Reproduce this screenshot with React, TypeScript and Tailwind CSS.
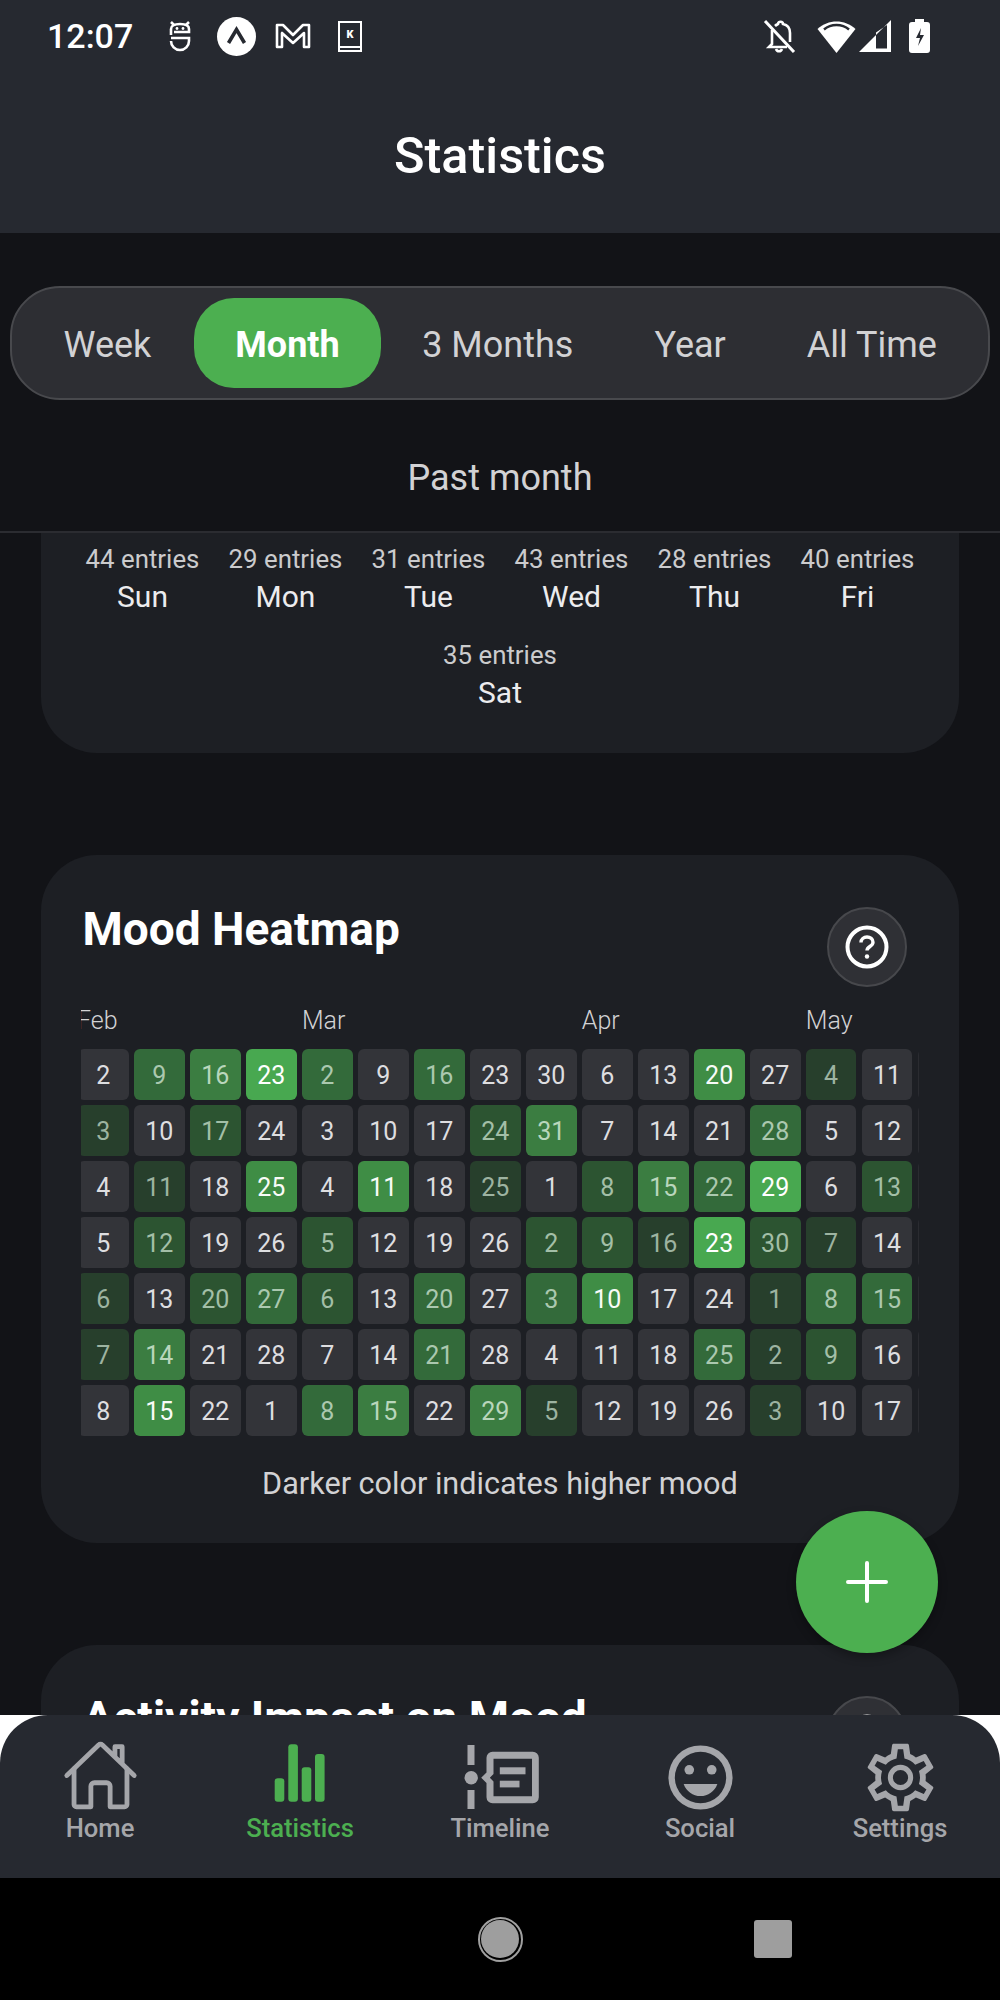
import React from 'react';
import { IoHomeOutline } from 'react-icons/io5';

// level -1 is a day without an entry, the rest go from low to high mood
const levelClass: Record<number, string> = {
  [-1]: 'bg-[#333439] text-[#dedee0]',
  0: 'bg-[#273f2c] text-[#9db3a1]',
  1: 'bg-[#2c5431] text-[#a3bfa7]',
  2: 'bg-[#336a3a] text-[#abc8af]',
  3: 'bg-[#3b7d41] text-[#b9d6bc]',
  4: 'bg-[#3f8d45] text-[#f8fbf8]',
  5: 'bg-[#48a850] text-white',
};

const days = [
  [2, 9, 16, 23, 2, 9, 16, 23, 30, 6, 13, 20, 27, 4, 11],
  [3, 10, 17, 24, 3, 10, 17, 24, 31, 7, 14, 21, 28, 5, 12],
  [4, 11, 18, 25, 4, 11, 18, 25, 1, 8, 15, 22, 29, 6, 13],
  [5, 12, 19, 26, 5, 12, 19, 26, 2, 9, 16, 23, 30, 7, 14],
  [6, 13, 20, 27, 6, 13, 20, 27, 3, 10, 17, 24, 1, 8, 15],
  [7, 14, 21, 28, 7, 14, 21, 28, 4, 11, 18, 25, 2, 9, 16],
  [8, 15, 22, 1, 8, 15, 22, 29, 5, 12, 19, 26, 3, 10, 17],
];

const levels = [
  [-1, 2, 3, 5, 2, -1, 2, -1, -1, -1, -1, 4, -1, 0, -1],
  [0, -1, 1, -1, -1, -1, -1, 1, 3, -1, -1, -1, 2, -1, -1],
  [-1, 0, -1, 4, -1, 4, -1, 0, -1, 1, 3, 2, 5, -1, 1],
  [-1, 1, -1, -1, 1, -1, -1, -1, 1, 1, 0, 5, 1, 0, -1],
  [0, -1, 1, 2, 1, -1, 2, -1, 2, 4, -1, -1, 0, 2, 2],
  [0, 3, -1, -1, -1, -1, 2, -1, -1, -1, -1, 2, 0, 1, -1],
  [-1, 4, -1, -1, 2, 3, -1, 3, 0, -1, -1, -1, 0, -1, -1],
];

const weekdays = [
  { name: 'Sun', count: 44 },
  { name: 'Mon', count: 29 },
  { name: 'Tue', count: 31 },
  { name: 'Wed', count: 43 },
  { name: 'Thu', count: 28 },
  { name: 'Fri', count: 40 },
  { name: 'Sat', count: 35 },
];

const ranges = ['Week', 'Month', '3 Months', 'Year', 'All Time'];

const rangeClass = (r: string) => {
  if (r === 'Month') {
    return 'h-[90px] ml-[1px] mr-[1px] pt-[4px] px-[41px] rounded-[40px] bg-[#4caf50] flex items-center shrink-0 whitespace-nowrap text-[36px] font-bold text-white';
  }
  if (r === 'Week') {
    return 'h-[90px] pt-[4px] px-[42px] flex items-center shrink-0 whitespace-nowrap text-[36px] text-[#d2d2d4]';
  }
  return 'h-[90px] pt-[4px] px-[40.500px] flex items-center shrink-0 whitespace-nowrap text-[36px] text-[#d2d2d4]';
};

const StatusBar = () => (
  <div className="flex items-center h-[72px] pl-[47px] pr-[70px] text-white">
    <span className="text-[34px] leading-[40px] font-medium w-[121px]">12:07</span>
    <svg width="24" height="32" viewBox="0 0 24 32" fill="none" stroke="white" strokeWidth="2.6" className="-mt-[1px]">
      <path d="M3 15V9c0-3 3-5 9-5s9 2 9 5v3H6" />
      <path d="M3 2l3 3M21 2l-3 3" />
      <path d="M3 18h18v3c0 5-4 9-9 9s-9-4-9-9" />
      <circle cx="9" cy="8.5" r="1.4" fill="white" stroke="none" />
      <circle cx="15" cy="8.5" r="1.4" fill="white" stroke="none" />
    </svg>
    <svg width="39" height="39" viewBox="0 0 39 39" className="ml-[25px]">
      <circle cx="19.5" cy="19.5" r="19.5" fill="white" />
      <path d="M11.5 26L19.5 12.5L27.5 26" fill="none" stroke="#262930" strokeWidth="3.6" />
    </svg>
    <svg width="36" height="28" viewBox="0 0 36 28" fill="none" stroke="white" strokeWidth="2.6" strokeLinejoin="round" className="ml-[19px]">
      <path d="M2 25V3h6l10 10L28 3h6v22h-5V11l-11 10L7 11v14z" />
    </svg>
    <div className="ml-[27px] w-[24px] h-[31px] border-2 border-white flex flex-col">
      <div className="flex-1 flex items-center justify-center bg-[#262930]">
        <span className="text-[11px] leading-none font-black text-white">K</span>
      </div>
      <div className="h-[4px] border-t-2 border-white" />
    </div>
    <div className="flex-1" />
    <svg width="33" height="34" viewBox="0 0 33 34" fill="none" stroke="white" strokeWidth="2.6">
      <path d="M9 11v14l-3 3h18" />
      <path d="M12 7c1-1 2-1.500 3-2 0-3 5-3 5 0 5 1 7 5 7 9v9" />
      <path d="M13 30c1 3 5 3 6 0" />
      <path d="M2 2l29 31" strokeWidth="3" />
    </svg>
    <svg width="39" height="33" viewBox="0 0 39 33" className="ml-[21px]">
      <path d="M19.500 33L0.500 9C11 -1 28 -1 38.500 9z" fill="white" />
      <path d="M7 9.500C14 3.500 25 3.500 32 9.500" fill="none" stroke="#262930" strokeWidth="2.400" />
    </svg>
    <svg width="32" height="32" viewBox="0 0 32 32" className="ml-[3px]">
      <path d="M0 32L32 0V32zM17 12.500V28.500H28V5z" fill="white" fillRule="evenodd" />
    </svg>
    <svg width="21" height="34" viewBox="0 0 21 34" className="ml-[18px]">
      <path d="M6 0h9v3h3c2 0 3 1 3 3v25c0 2-1 3-3 3H3c-2 0-3-1-3-3V6c0-2 1-3 3-3h3z" fill="white" />
      <path d="M12 9l-5 10h4l-2 8 6-11h-4z" fill="#262930" />
    </svg>
  </div>
);

const HelpButton = () => (
  <div className="w-[80px] h-[80px] mt-[4.500px] rounded-full bg-[#2f3035] border-[2.500px] border-[#47484c] flex items-center justify-center shrink-0">
    <svg width="44" height="44" viewBox="0 0 44 44" fill="none" stroke="white" strokeWidth="4">
      <circle cx="22" cy="22" r="19.500" />
      <path d="M16 17.500c0-3.500 2.800-5.500 6-5.500s6 2 6 5.200c0 4.300-6 4.300-6 8.300" strokeWidth="3.400" />
      <circle cx="22" cy="31.500" r="2.200" fill="white" stroke="none" />
    </svg>
  </div>
);

const CardHeader = ({ title }: { title: string }) => (
  <div className="flex items-start justify-between">
    <h2 className="text-[46px] leading-[54px] font-bold text-white whitespace-nowrap">{title}</h2>
    <div className="mr-[12px]">
      <HelpButton />
    </div>
  </div>
);

const WeekdayCard = () => (
  <section className="mx-[41px] -mt-[60px] pt-[71px] pb-[41.500px] px-[30px] rounded-[56px] bg-[#1d1f24] flex flex-wrap justify-center gap-y-[25px]">
    {weekdays.map((d) => (
      <div key={d.name} className="w-[143px] flex flex-col items-center gap-[5px]">
        <span className="text-[25.800px] leading-[30px] text-[#cbcbcd]">{d.count} entries</span>
        <span className="text-[30px] leading-[36px] text-[#ececee]">{d.name}</span>
      </div>
    ))}
  </section>
);

const Heatmap = () => (
  <section className="mx-[41px] mt-[102px] pt-[47.500px] pb-[40.700px] pl-[40.300px] pr-[40.500px] rounded-[56px] bg-[#1d1f24]">
    <div className="pl-[1.200px]">
      <CardHeader title="Mood Heatmap" />
    </div>
    <div className="overflow-hidden">
      <div className="-ml-[3.300px] w-[896px]">
        <div className="grid grid-cols-[repeat(16,50.700px)] gap-x-[5.300px] mt-[19px] mb-[13.800px] text-[25px] leading-[30px] font-light text-[#d2d2d4]">
          <span className="col-span-4 -ml-[1px]">Feb</span>
          <span className="col-span-5">Mar</span>
          <span className="col-span-4">Apr</span>
          <span className="col-span-3">May</span>
        </div>
        <div className="grid grid-cols-[repeat(16,50.700px)] gap-[5.300px]">
          {days.map((row, r) => (
            <React.Fragment key={r}>
              {row.map((day, c) => (
                <div
                  key={c}
                  className={`h-[50.700px] pt-[2px] rounded-[6px] flex items-center justify-center text-[25px] ${levelClass[levels[r][c]]}`}
                >
                  {day}
                </div>
              ))}
              <div className="h-[50.700px] rounded-[6px] bg-[#2a2b30]" />
            </React.Fragment>
          ))}
        </div>
      </div>
    </div>
    <p className="mt-[30.300px] text-center text-[30.600px] leading-[36px] text-[#d2d2d4]">Darker color indicates higher mood</p>
  </section>
);

const TimelineIcon = () => (
  <svg width="77" height="77" viewBox="0 0 77 77" fill="#a5a6aa">
    <rect x="5.500" y="6" width="7" height="20" />
    <circle cx="9.200" cy="38.700" r="6.700" />
    <rect x="5.500" y="51" width="7" height="19" />
    <path
      fillRule="evenodd"
      d="M30.500 12.700H70.800a6 6 0 0 1 6 6V58.300a6 6 0 0 1-6 6H30.500a6 6 0 0 1-6-6V44L19.200 38.700L24.500 33.500V18.700a6 6 0 0 1 6-6zM31.500 19.700V35L27.800 38.700L31.500 42.400V57.300H70V19.700z"
    />
    <rect x="37.800" y="28.300" width="25.700" height="7" />
    <rect x="37.800" y="41.700" width="19.700" height="6.700" />
  </svg>
);

const BarsIcon = () => (
  <svg width="77" height="77" viewBox="0 0 77 77" fill="#4caf50">
    <rect x="12.700" y="39.300" width="9.600" height="23.400" rx="3" />
    <rect x="26.300" y="5.300" width="9.600" height="57.400" rx="3" />
    <rect x="39.700" y="28.300" width="9.600" height="34.400" rx="3" />
    <rect x="53" y="15" width="9.600" height="47.700" rx="3" />
  </svg>
);

const SmileIcon = () => (
  <svg width="77" height="77" viewBox="0 0 24 24" fill="#a5a6aa">
    <path
      fillRule="evenodd"
      d="M12 2a10 10 0 1 1 0 20a10 10 0 0 1 0-20zM12 4a8 8 0 1 0 0 16a8 8 0 0 0 0-16z"
    />
    <circle cx="8.500" cy="9.600" r="1.500" />
    <circle cx="15.500" cy="9.600" r="1.500" />
    <path d="M6.750 14h10.500c-.8 2.300-2.900 3.800-5.250 3.800s-4.450-1.500-5.250-3.800z" />
  </svg>
);

// outer contour filled, then the inner contour in the bar colour on top, a little wider for the thin wall
const CogIcon = () => (
  <svg width="81" height="81" viewBox="0 0 24 24" fill="#a5a6aa" className="-m-[2px]">
    <path d="M10,22C9.75,22 9.54,21.82 9.5,21.58L9.13,18.93C8.5,18.68 7.96,18.34 7.44,17.94L4.95,18.95C4.73,19.03 4.46,18.95 4.34,18.73L2.34,15.27C2.21,15.05 2.27,14.78 2.46,14.63L4.57,12.97L4.5,12L4.57,11L2.46,9.37C2.27,9.22 2.21,8.95 2.34,8.73L4.34,5.27C4.46,5.05 4.73,4.96 4.95,5.05L7.44,6.05C7.96,5.66 8.5,5.32 9.13,5.07L9.5,2.42C9.54,2.18 9.75,2 10,2H14C14.25,2 14.46,2.18 14.5,2.42L14.87,5.07C15.5,5.32 16.04,5.66 16.56,6.05L19.05,5.05C19.27,4.96 19.54,5.05 19.66,5.27L21.66,8.73C21.79,8.95 21.73,9.22 21.54,9.37L19.43,11L19.5,12L19.43,13L21.54,14.63C21.73,14.78 21.79,15.05 21.66,15.27L19.66,18.73C19.54,18.95 19.27,19.04 19.05,18.95L16.56,17.95C16.04,18.34 15.5,18.68 14.87,18.93L14.5,21.58C14.46,21.82 14.25,22 14,22H10Z" />
    <path
      fill="#262930"
      transform="translate(12 12) scale(1.05) translate(-12 -12)"
      d="M11.25,4L10.88,6.61C9.68,6.86 8.62,7.5 7.85,8.39L5.44,7.35L4.69,8.65L6.8,10.2C6.4,11.37 6.4,12.64 6.8,13.8L4.68,15.36L5.43,16.66L7.86,15.62C8.63,16.5 9.68,17.14 10.87,17.38L11.24,20H12.76L13.13,17.39C14.32,17.14 15.37,16.5 16.14,15.62L18.57,16.66L19.32,15.36L17.2,13.81C17.6,12.64 17.6,11.37 17.2,10.2L19.31,8.65L18.56,7.35L16.15,8.39C15.38,7.5 14.32,6.86 13.12,6.62L12.75,4H11.25Z"
    />
    <circle cx="12" cy="12" r="3" fill="none" stroke="#a5a6aa" strokeWidth="1.500" />
  </svg>
);

const tabs = [
  { label: 'Home', icon: <IoHomeOutline size={77} color="#a5a6aa" className="-mt-[2px] mb-[2px]" /> },
  { label: 'Statistics', icon: <BarsIcon />, active: true },
  { label: 'Timeline', icon: <TimelineIcon /> },
  { label: 'Social', icon: <SmileIcon /> },
  { label: 'Settings', icon: <CogIcon /> },
];

const BottomTabs = () => (
  <div className="bg-white h-[163px] shrink-0">
    <nav className="h-full rounded-t-[48px] bg-[#262930] grid grid-cols-5 pt-[24px]">
      {tabs.map((t) => (
        <div key={t.label} className="flex flex-col items-center">
          {t.icon}
          <span
            className={`-mt-[3px] text-[25.600px] leading-[30px] font-medium ${t.active ? 'text-[#4caf50]' : 'text-[#a5a6aa]'}`}
          >
            {t.label}
          </span>
        </div>
      ))}
    </nav>
  </div>
);

export default function App() {
  return (
    <div className="relative w-[1000px] h-[2000px] overflow-hidden flex flex-col bg-black font-[Roboto,sans-serif]">
      <header className="h-[233px] shrink-0 bg-[#262930]">
        <StatusBar />
        <h1 className="mt-[54px] text-center text-[50.400px] leading-[60px] font-medium text-white">Statistics</h1>
      </header>

      <div className="h-[300px] shrink-0 bg-[#121317] border-b-2 border-[#2b2c31] pt-[53px] relative z-10">
        <div className="mx-[10px] h-[114px] rounded-[50px] bg-[#2d2e33] border-[2.500px] border-[#48494d] px-[9.500px] flex items-center">
          {ranges.map((r) => (
            <div key={r} className={rangeClass(r)}>
              {r}
            </div>
          ))}
        </div>
        <p className="mt-[56px] text-center text-[36px] leading-[44px] text-[#d2d2d4]">Past month</p>
      </div>

      <main className="flex-1 overflow-hidden bg-[#121317]">
        <WeekdayCard />
        <Heatmap />
        <section className="mx-[41px] mt-[102px] pt-[46.500px] pl-[41.500px] pr-[40.500px] pb-[40px] rounded-[56px] bg-[#1d1f24]">
          <CardHeader title="Activity Impact on Mood" />
        </section>
      </main>

      <BottomTabs />

      <div className="h-[122px] shrink-0 bg-black flex justify-center items-center">
        <div className="w-[273px]" />
        <div className="w-[273px] flex justify-center">
          <div className="w-[45px] h-[45px] rounded-full border-2 border-[#a0a0a0] p-[1.500px]">
            <div className="w-full h-full rounded-full bg-[#9e9e9e]" />
          </div>
        </div>
        <div className="w-[273px] flex justify-center">
          <div className="w-[38px] h-[38px] rounded-[3px] bg-[#9e9e9e]" />
        </div>
      </div>

      {/* FAB floats above the scroll content */}
      <button className="absolute left-[796px] top-[1511px] w-[142px] h-[142px] rounded-full bg-[#4caf50] shadow-[0_4px_10px_rgba(0,0,0,0.3)] flex items-center justify-center">
        <svg width="42" height="42" viewBox="0 0 42 42" stroke="white" strokeWidth="4" strokeLinecap="round">
          <path d="M21 2v38M2 21h38" />
        </svg>
      </button>
    </div>
  );
}
